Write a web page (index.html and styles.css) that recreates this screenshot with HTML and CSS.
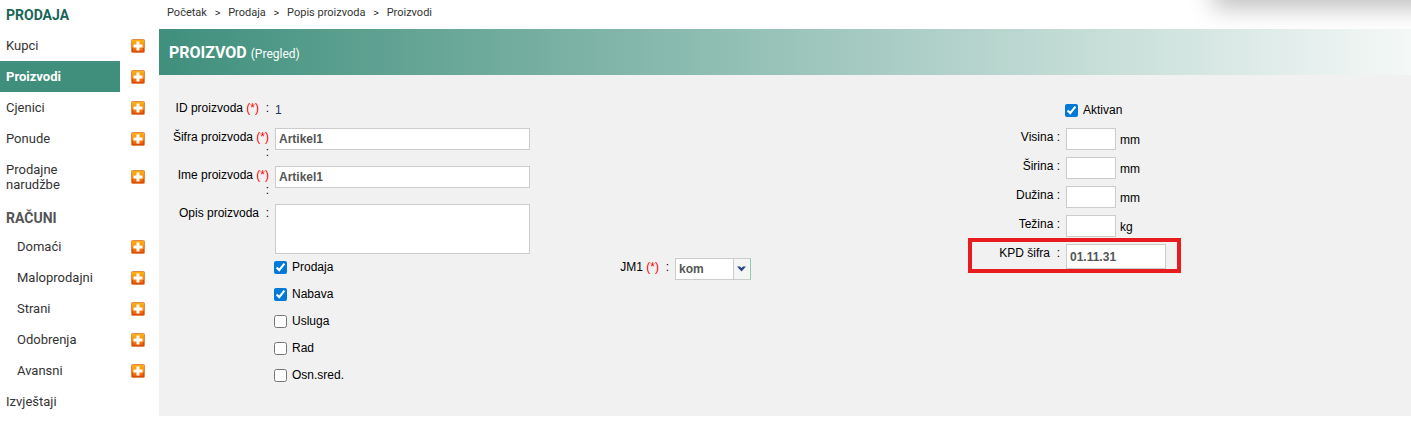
FILE: index.html
```html
<!DOCTYPE html>
<html lang="hr">
<head>
<meta charset="utf-8">
<title>Proizvod</title>
<link rel="stylesheet" href="styles.css">
</head>
<body>
<svg class="defs" aria-hidden="true">
  <defs>
    <linearGradient id="orange" x1="0" y1="0" x2="0" y2="1">
      <stop offset="0" stop-color="#fdb515"/>
      <stop offset="0.5" stop-color="#f98d0c"/>
      <stop offset="1" stop-color="#e84e08"/>
    </linearGradient>
    <symbol id="plus" viewBox="0 0 14 14">
      <rect x="0.5" y="0.5" width="13" height="13" rx="1" fill="url(#orange)" stroke="#e08a4c"/>
      <path d="M1.5 9V12.5H12.5V9" fill="none" stroke="#dc4a08"/>
      <path d="M5.5 2.5h3v3h3v3h-3v3h-3v-3h-3v-3h3z" fill="#fff"/>
    </symbol>
  </defs>
</svg>
<div class="layout">
  <nav class="sidebar">
    <h2 class="menu-title menu-title-current">PRODAJA</h2>
    <ul class="menu">
      <li><a class="menu-link" href="#">Kupci</a><a class="add" href="#" aria-label="Dodaj kupca"><svg><use href="#plus"/></svg></a></li>
      <li><a class="menu-link active" href="#">Proizvodi</a><a class="add" href="#" aria-label="Dodaj proizvod"><svg><use href="#plus"/></svg></a></li>
      <li><a class="menu-link" href="#">Cjenici</a><a class="add" href="#" aria-label="Dodaj cjenik"><svg><use href="#plus"/></svg></a></li>
      <li><a class="menu-link" href="#">Ponude</a><a class="add" href="#" aria-label="Dodaj ponudu"><svg><use href="#plus"/></svg></a></li>
      <li><a class="menu-link" href="#">Prodajne<br>narudžbe</a><a class="add" href="#" aria-label="Dodaj narudžbu"><svg><use href="#plus"/></svg></a></li>
    </ul>
    <h2 class="menu-title menu-title-sub">RAČUNI</h2>
    <ul class="menu">
      <li><a class="menu-link nested" href="#">Domaći</a><a class="add" href="#" aria-label="Dodaj domaći račun"><svg><use href="#plus"/></svg></a></li>
      <li><a class="menu-link nested" href="#">Maloprodajni</a><a class="add" href="#" aria-label="Dodaj maloprodajni račun"><svg><use href="#plus"/></svg></a></li>
      <li><a class="menu-link nested" href="#">Strani</a><a class="add" href="#" aria-label="Dodaj strani račun"><svg><use href="#plus"/></svg></a></li>
      <li><a class="menu-link nested" href="#">Odobrenja</a><a class="add" href="#" aria-label="Dodaj odobrenje"><svg><use href="#plus"/></svg></a></li>
      <li><a class="menu-link nested" href="#">Avansni</a><a class="add" href="#" aria-label="Dodaj avansni račun"><svg><use href="#plus"/></svg></a></li>
      <li><a class="menu-link" href="#">Izvještaji</a></li>
    </ul>
  </nav>
  <main class="content">
    <nav class="breadcrumb">
      <a href="#">Početak</a><span>&gt;</span><a href="#">Prodaja</a><span>&gt;</span><a href="#">Popis proizvoda</a><span>&gt;</span><a href="#">Proizvodi</a>
    </nav>
    <header class="page-header">
      <h1>PROIZVOD</h1><span>(Pregled)</span>
    </header>
    <form class="form">
      <div class="general">
        <span class="label">ID proizvoda <em>(*)</em> &nbsp;:</span>
        <span class="id-value">1</span>
        <label class="label" for="code">Šifra proizvoda <em>(*)</em><br>:</label>
        <input class="text" id="code" type="text" value="Artikel1">
        <label class="label" for="name">Ime proizvoda <em>(*)</em><br>:</label>
        <input class="text" id="name" type="text" value="Artikel1">
        <label class="label" for="desc">Opis proizvoda &nbsp;:</label>
        <textarea class="text area" id="desc"></textarea>
      </div>
      <div class="flags">
        <label class="check"><input type="checkbox" checked>Prodaja</label>
        <label class="check"><input type="checkbox" checked>Nabava</label>
        <label class="check"><input type="checkbox">Usluga</label>
        <label class="check"><input type="checkbox">Rad</label>
        <label class="check"><input type="checkbox">Osn.sred.</label>
      </div>
      <div class="unit">
        <label class="label" for="unit">JM1 <em>(*)</em> &nbsp;:</label>
        <div class="select">
          <select id="unit"><option>kom</option></select>
          <svg viewBox="0 0 9 6"><path d="M0 0.5h3L4.500 2L6 0.500h3L4.500 5.500z" fill="#23478a"/></svg>
        </div>
      </div>
      <div class="measures">
        <label class="check active-check"><input type="checkbox" checked>Aktivan</label>
        <div class="measure"><label class="label" for="h">Visina :</label><input class="text short" id="h" type="text"><span>mm</span></div>
        <div class="measure"><label class="label" for="w">Širina :</label><input class="text short" id="w" type="text"><span>mm</span></div>
        <div class="measure"><label class="label" for="l">Dužina :</label><input class="text short" id="l" type="text"><span>mm</span></div>
        <div class="measure"><label class="label" for="m">Težina :</label><input class="text short" id="m" type="text"><span>kg</span></div>
        <div class="measure marked"><label class="label" for="kpd">KPD šifra &nbsp;:</label><input class="text kpd" id="kpd" type="text" value="01.11.31"></div>
      </div>
    </form>
  </main>
</div>
<div class="corner" aria-hidden="true"><div class="corner-panel"></div></div>
</body>
</html>
```
FILE: styles.css
```css
* { box-sizing: border-box; }
body {
  margin: 0;
  background: #fff;
  color: #000;
  font: 12px/15px "Liberation Sans", Arial, sans-serif;
}
a { color: inherit; text-decoration: none; }
.defs { position: absolute; width: 0; height: 0; }
.layout { display: flex; align-items: flex-start; }

.sidebar {
  flex: 0 0 159px;
  color: #333;
  font: 13px/15px Roboto, sans-serif;
}
.menu-title {
  margin: 0;
  padding: 7px 6px;
  font-size: 14px;
  line-height: 16px;
  font-weight: 700;
  color: #555;
}
.menu-title-current { color: #19655a; }
.menu-title-sub { padding: 10px 6px 5px; }
.menu { margin: 0; padding: 0; list-style: none; }
.menu li { display: flex; align-items: center; gap: 11px; }
.menu-link { width: 120px; padding: 8px 6px; }
.menu-link.nested { padding-left: 17px; }
.menu-link.active { background: #3f8f7c; color: #fff; font-weight: 700; }
.add, .add svg { display: block; width: 14px; height: 14px; }

.content { flex: 1; min-width: 0; }
.breadcrumb {
  display: flex;
  gap: 8px;
  height: 29px;
  padding: 5px 8px;
  color: #333;
  font: 11px/15px Roboto, sans-serif;
}
.breadcrumb span { color: #000; font: 9px/17px "Liberation Sans", Arial, sans-serif; }
.page-header {
  display: flex;
  align-items: baseline;
  gap: 4px;
  padding: 14px 10px 11px;
  background: linear-gradient(to right, #3f8f7c, #f4f8f7);
  color: #fff;
  font: 12px/20px Roboto, sans-serif;
}
.page-header h1 { margin: 0; font-size: 16px; font-weight: 700; }

.form {
  display: grid;
  grid-template-columns: 400fr 413fr 439fr;
  grid-template-rows: auto auto;
  padding: 24px 0 27px;
  background: #f1f1f1;
}
.label { padding-top: 2px; text-align: right; }
.label em { color: #f00; font-style: normal; }
.general {
  display: grid;
  grid-template-columns: 110px 255px;
  column-gap: 6px;
  row-gap: 6px;
  align-items: start;
}
.id-value { padding: 4px 0; color: #17365d; }
.text, .select select {
  display: block;
  width: 100%;
  height: 22px;
  margin: 0;
  padding: 0 3px;
  border: 1px solid #ccc;
  border-radius: 0;
  background: #fff;
  color: #555;
  font: bold 12px/15px "Liberation Sans", Arial, sans-serif;
}
.area { height: 50px; resize: none; }
.flags { grid-column: 1; grid-row: 2; padding-left: 115px; }
.check { display: flex; align-items: center; gap: 5px; height: 27px; }
.check input { width: 13px; height: 13px; margin: 0; accent-color: #0078d7; }

.unit {
  display: grid;
  grid-template-columns: 110px 76px;
  gap: 6px;
  grid-column: 2;
  grid-row: 2;
  align-items: start;
  padding-top: 4px;
}
.select { position: relative; }
.select select {
  appearance: none;
  border-right-color: #8fcfa8;
  background: linear-gradient(to right, #ccc 1px, #f4f6f6 1px) right / 17px 100% no-repeat #fff;
}
.select svg { position: absolute; right: 5px; top: 8px; width: 9px; height: 6px; pointer-events: none; }

.measures { grid-column: 3; grid-row: 1 / span 2; }
.active-check { height: 23px; margin-bottom: 4px; padding-left: 93px; }
.measure {
  display: flex;
  width: max-content;
  padding: 2px 0 5px;
}
.measure .label { width: 88px; margin-right: 6px; }
.measure span { padding: 5px 0 2px 4px; }
.measure .short { width: 50px; }
.measure .kpd { width: 100px; height: 25px; }
.measure.marked { padding: 2px 11px 0 0; outline: 4px solid #e81c1f; }

.corner {
  position: absolute;
  top: 0;
  right: 0;
  width: 230px;
  height: 29px;
  overflow: hidden;
  pointer-events: none;
}
.corner-panel {
  height: 40px;
  margin: -42px -60px 0 32px;
  box-shadow: 0 10px 24px rgba(0, 0, 0, 0.25);
}
```
